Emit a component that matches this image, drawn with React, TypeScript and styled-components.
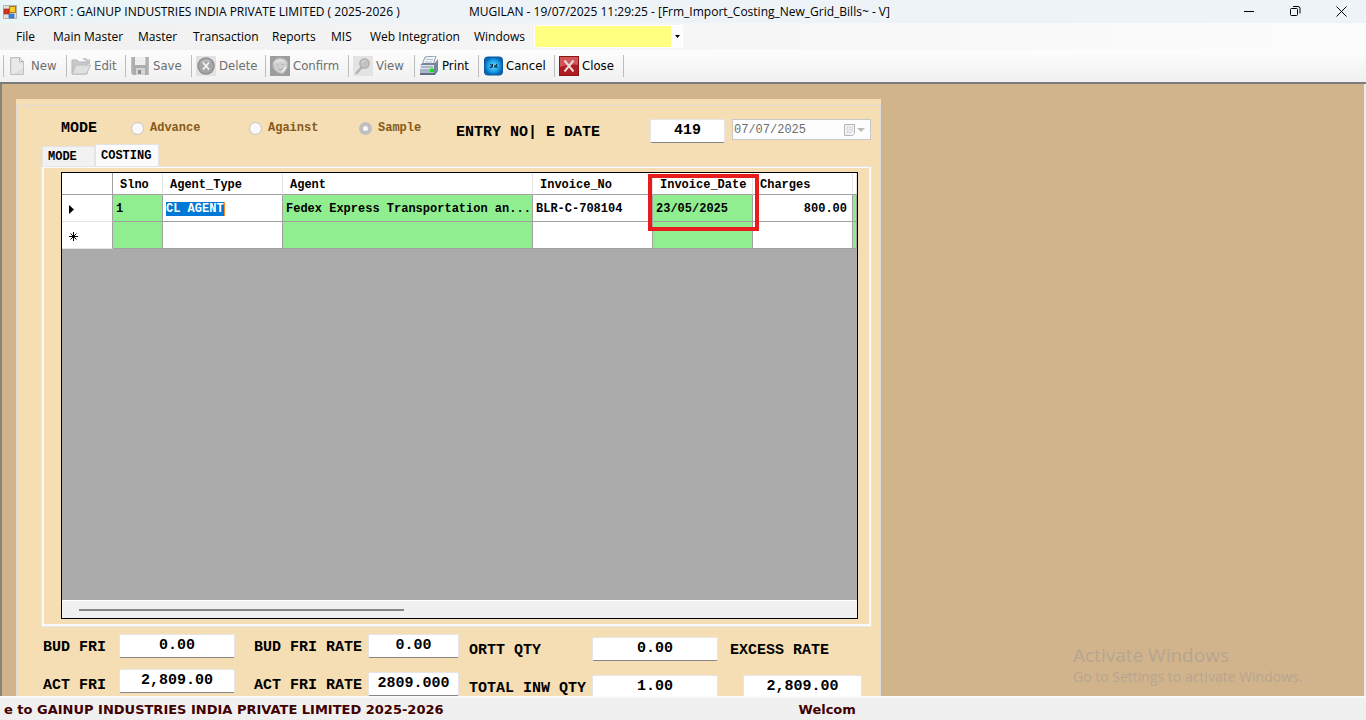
import React from 'react';
import styled, { createGlobalStyle } from 'styled-components';

const mono = `"Liberation Mono", "Courier New", monospace`;
const sansUi = `"Open Sans", "Segoe UI", sans-serif`;
const toolUi = `"DejaVu Sans Condensed", "DejaVu Sans", Tahoma, sans-serif`;
const tan = '#d2b48c';
const wheat = '#f5deb3';
const green = '#90ee90';

const Global = createGlobalStyle`
  * { box-sizing: border-box; }
  body { margin: 0; background: ${tan}; }
  button, input, select { font: inherit; color: inherit; margin: 0; }
  button { background: none; border: 0; padding: 0; white-space: nowrap; }
`;

const Shell = styled.div`
  display: flex;
  flex-direction: column;
  height: 100vh;
  overflow: hidden;
  color: #000;
  font: 12px/16px ${sansUi};
`;

const TitleBar = styled.header`
  flex: none;
  display: flex;
  align-items: center;
  height: 23px;
  padding-left: 3px;
  background: linear-gradient(90deg, #e9f5f6 0, #eef3f8 300px);
`;
const TitleText = styled.span<{ $w?: number }>`
  width: ${p => (p.$w ? `${p.$w}px` : 'auto')};
  white-space: nowrap;
`;
const TitleIcon = styled.svg`
  margin-right: 6px;
`;
const WindowButtons = styled.div`
  display: flex;
  margin-left: auto;
  padding-right: 2px;
`;
const WindowButton = styled.button`
  display: flex;
  align-items: center;
  justify-content: center;
  width: 46px;
  height: 20px;
`;

const MenuBar = styled.nav`
  flex: none;
  display: flex;
  align-items: center;
  height: 27px;
  padding-left: 16px;
  background: linear-gradient(90deg, #f0f0f0, #fcfcfc);
`;
const MenuItem = styled.button<{ $w: number }>`
  flex: none;
  width: ${p => p.$w}px;
  text-align: left;
`;
const CompanyPicker = styled.label`
  display: flex;
  width: 149px;
  height: 23px;
  background: #fdfdfd;
  border: 1px solid #fff;
`;
const PickerSelect = styled.select`
  width: 136px;
  height: 21px;
  appearance: none;
  border: 0;
  background: #ffff80;
`;
const PickerArrow = styled.svg`
  margin: 9px 0 0 3px;
`;

const ToolBar = styled.div`
  flex: none;
  display: flex;
  align-items: center;
  height: 34px;
  padding-left: 3px;
  background: linear-gradient(#fdfdfd, #f0f0f0);
  border-bottom: 2px solid #7b7b7b;
  font: 13px/16px ${toolUi};
`;
const Tool = styled.button<{ $w: number }>`
  display: flex;
  align-items: center;
  gap: 3px;
  flex: none;
  width: ${p => p.$w}px;
  height: 22px;
  padding-left: 4px;
  border-left: 1px solid #bdbdbd;
  color: #000;
  &:disabled { color: #6d6d6d; }
`;
const ToolEnd = styled.span`
  width: 1px;
  height: 22px;
  background: #bdbdbd;
`;

const Workspace = styled.main`
  position: relative;
  flex: 1;
  min-height: 0;
  overflow: hidden;
  padding: 15px 0 0 14px;
  background: ${tan};
  border-left: 2px solid #8a8378;
  border-right: 2px solid #ececec;
`;
const Form = styled.form`
  max-width: 865px;
  padding-top: 6px;
  background: ${wheat};
  font: bold 15px/16px ${mono};
`;
const GroupBox = styled.div`
  padding: 13px 8px 20px 24px;
  border: 1px solid #dcdcdc;
`;

const TopRow = styled.div`
  display: flex;
  align-items: flex-start;
  height: 25px;
  padding-left: 20px;
`;
const ModeLabel = styled.span`
  width: 70px;
  line-height: 20px;
`;
const RadioLabel = styled.label<{ $w: number }>`
  display: flex;
  align-items: center;
  gap: 6px;
  width: ${p => p.$w}px;
  height: 18px;
  font-size: 12px;
  line-height: 18px;
  color: #86591a;
`;
const Radio = styled.input`
  appearance: none;
  width: 13px;
  height: 13px;
  border: 1px solid #c3c3c3;
  border-radius: 50%;
  background: #f9f9f9;
  &:checked { border: 4px solid #bfbfbf; }
`;
const EntryLabel = styled.label`
  width: 194px;
  line-height: 28px;
  white-space: nowrap;
`;
const NumberBox = styled.input<{ $w: number }>`
  flex: none;
  display: block;
  width: ${p => p.$w}px;
  height: 24px;
  padding: 0 0 2px;
  text-align: center;
  background: #fff;
  border: 1px solid #e6e6e6;
  border-bottom-color: #868686;
  border-radius: 2px;
`;
const DateBox = styled.div`
  display: flex;
  align-items: center;
  width: 139px;
  height: 21px;
  margin-left: 7px;
  padding: 0 5px 0 1px;
  background: #fdfdfd;
  border: 1px solid #c8c8c8;
`;
const DateInput = styled.input`
  width: 110px;
  padding: 0;
  border: 0;
  background: none;
  font: 12px/16px ${mono};
  color: #6d6d6d;
`;

const TabStrip = styled.div`
  display: flex;
  align-items: flex-end;
  padding-left: 1px;
`;
const Tab = styled.button<{ $active?: boolean }>`
  width: ${p => (p.$active ? 64 : 53)}px;
  height: ${p => (p.$active ? 22 : 20)}px;
  padding: 0 5px;
  text-align: left;
  font-size: 12px;
  background: ${p => (p.$active ? '#fbfbfb' : '#f2f2f2')};
  border: 1px solid #e4e4e4;
  border-bottom: 0;
`;
const TabPage = styled.div`
  padding: 4px 11px 5px 17px;
  border: 3px solid #fafafa;
  border-top-width: 2px;
  outline: 1px solid #e6e6e6;
  outline-offset: -1px;
`;
const GridBox = styled.div`
  display: flex;
  flex-direction: column;
  height: 447px;
  overflow: hidden;
  background: #ababab;
  border: 1px solid #000;
`;
const Grid = styled.table`
  table-layout: fixed;
  width: 100%;
  border-collapse: separate;
  border-spacing: 0;
  font-size: 12px;
  background: #fff;
`;
const Head = styled.th<{ $w?: number }>`
  position: relative;
  width: ${p => (p.$w ? `${p.$w}px` : 'auto')};
  height: 22px;
  padding: 2px 0 0 7px;
  text-align: left;
  font-weight: bold;
  border-right: 1px solid #e3e3e3;
  border-bottom: 1px solid #a0a0a0;
  white-space: nowrap;
  &:first-child { border-right-color: #a0a0a0; }
`;
const Cell = styled.td<{ $green?: boolean; $right?: boolean }>`
  height: 27px;
  padding: 2px 5px 0 3px;
  text-align: ${p => (p.$right ? 'right' : 'left')};
  background: ${p => (p.$green ? green : '#fff')};
  border-right: 1px solid #a0a0a0;
  border-bottom: 1px solid #a0a0a0;
  white-space: nowrap;
`;
const RowHead = styled.th`
  padding: 2px 0 0 6px;
  text-align: left;
  border-right: 1px solid #a0a0a0;
  border-bottom: 1px solid #e3e3e3;
  svg { display: block; }
`;
const Selected = styled.span`
  background: #0078d7;
  color: #fff;
  border-right: 1px solid #ff8728;
`;
const Highlight = styled.span`
  position: absolute;
  left: -5px;
  right: -7px;
  top: 1px;
  height: 57px;
  border: 4px solid #e81c1c;
  z-index: 1;
`;
const ScrollTrack = styled.div`
  height: 18px;
  margin-top: auto;
  padding: 8px 17px;
  background: #f0f0f0;
  border-top: 1px solid #fff;
`;
const ScrollThumb = styled.div`
  width: 325px;
  height: 2px;
  background: #868686;
`;

const Totals = styled.div`
  display: flex;
  align-items: flex-start;
  padding: 7px 0 0 2px;
`;
const Pair = styled.div<{ $drop?: boolean }>`
  display: flex;
  flex: none;
  padding-top: ${p => (p.$drop ? 3 : 0)}px;
  margin-right: ${p => (p.$drop ? 12 : 10)}px;
  &:first-child { margin-right: 19px; }
  &:last-child { margin-right: 0; }
`;
const Stack = styled.div<{ $w: number; $gap?: number; $end?: boolean }>`
  display: flex;
  flex-direction: column;
  align-items: ${p => (p.$end ? 'flex-end' : 'stretch')};
  gap: ${p => p.$gap ?? 14}px;
  width: ${p => p.$w}px;
`;
const TotalLabel = styled.label`
  align-self: flex-start;
  height: 24px;
  line-height: 27px;
  white-space: nowrap;
`;

const StatusBar = styled.footer`
  flex: none;
  display: flex;
  gap: 355px;
  height: 24px;
  padding-left: 4px;
  background: #f0f0f0;
  border-top: 2px solid #fafafa;
  font: bold 13px/23px "DejaVu Sans", Verdana, sans-serif;
  color: #400000;
  white-space: nowrap;
`;
const Watermark = styled.aside`
  position: absolute;
  right: 55px;
  bottom: 9px;
  width: 236px;
  font-size: 14px;
  line-height: 20px;
  color: #b5a591;
  white-space: nowrap;
`;
const WatermarkTitle = styled.div`
  font-size: 19px;
  line-height: 24px;
`;

const AppIcon = () => (
  <TitleIcon width="14" height="14" viewBox="0 0 14 14" aria-hidden="true">
    <rect x=".5" y=".5" width="13" height="13" fill="#e2e2dc" stroke="#b5b5b0" />
    <rect x="6.500" y="1.500" width="6" height="6" fill="#fbcb2e" stroke="#a9791a" />
    <rect x="1" y="4" width="5" height="5" fill="#d9331c" stroke="#9c2413" strokeWidth=".6" />
    <rect x="6" y="9" width="5" height="4" fill="#3f86e8" stroke="#2358a8" strokeWidth=".6" />
  </TitleIcon>
);

const icon = { width: 20, height: 20, viewBox: '0 0 20 20', 'aria-hidden': true } as const;

const NewIcon = () => (
  <svg {...icon}>
    <path d="M2.500 1.500h9l4 4v13h-13z" fill="#dedede" stroke="#c0c0c0" />
    <path d="M4 3h7v4h4v5L6 17H4z" fill="#e9e9e9" />
    <path d="M11.500 1.500v4h4z" fill="#f7f7f7" stroke="#b6b6b6" />
  </svg>
);
const EditIcon = () => (
  <svg {...icon}>
    <path d="M1 4h5l2 2h8v12H1z" fill="#c9c9c9" stroke="#b5b5b5" />
    <path d="M5 9h14.500l-4 9H1z" fill="#e0e0e0" stroke="#bcbcbc" />
    <path d="M11 3c3-2 5-1 6 1l2-1v5h-5l1.500-2c-1-2-2-2-4.500-3z" fill="#c3c3c3" />
  </svg>
);
const SaveIcon = () => (
  <svg {...icon}>
    <path d="M1 1h18v18H3l-2-2z" fill="#acacac" />
    <path d="M5 1h10.500v8H5z" fill="#eeeeee" />
    <path d="M1 1h1.500v16H1zM17.500 1H19v18h-1.500z" fill="#bcbcbc" />
    <path d="M6 12h9v7H6z" fill="#d4d4d4" />
    <path d="M8 14h3v4H8z" fill="#8f8f8f" />
  </svg>
);
const DeleteIcon = () => (
  <svg {...icon}>
    <path d="M0 0h20v20H0z" fill="#e2e2e2" />
    <circle cx="10" cy="10" r="8" fill="#a6a6a6" stroke="#8f8f8f" strokeWidth="1.500" />
    <path d="M4 7c2-4 9-5 12-1-4-1-8 0-12 1z" fill="#bcbcbc" />
    <path d="M7 6.500l6 7M13 6.500l-6 7" stroke="#f6f6f6" strokeWidth="1.800" />
  </svg>
);
const ConfirmIcon = () => (
  <svg {...icon}>
    <path d="M0 0h20v20H0z" fill="#9d9d9d" />
    <path d="M10 2c4 0 8 2 7.500 7 0 4-2.500 7-5 9-5-1-9-4-9.500-8S5 2 10 2z" fill="#cfcfcf" stroke="#b4b4b4" />
    <path d="M3 8c2-5 9-6 13-2-4 0-9 0-13 2z" fill="#dedede" />
    <path d="M7 9h1.500M12 8.500h1.500M8 13c2 1 4 1 5-.5" stroke="#a8a8a8" fill="none" />
    <path d="M12 16l4-5" stroke="#f0f0f0" strokeWidth="1.500" />
  </svg>
);
const ViewIcon = () => (
  <svg {...icon}>
    <path d="M0 0h20v20H0z" fill="#e3e3e3" />
    <path d="M9 11l-5.500 6" stroke="#b0b0b0" strokeWidth="2.500" strokeLinecap="round" />
    <circle cx="11.500" cy="7.500" r="4.700" fill="#c2c2c2" stroke="#acacac" strokeWidth="1.300" />
    <path d="M9 7c0-2 2-3 4-2" stroke="#dcdcdc" fill="none" />
  </svg>
);
const PrintIcon = () => (
  <svg {...icon}>
    <path d="M6 1l11-1-3 9H3z" fill="#f4f7fa" stroke="#8d9aac" />
    <path d="M7 3.500h7M6 6h7" stroke="#b4bfce" />
    <path d="M1 9l3-2h12l3-4v12l-3 4H1z" fill="#76859c" />
    <path d="M1 9h14v4H1z" fill="#dde4ec" />
    <path d="M1 13h14v5.500H1z" fill="#a9b5c5" />
    <path d="M1 18h15" stroke="#4d5a70" strokeWidth="1.500" />
    <path d="M2 11h12" stroke="#7d8ba0" />
    <path d="M11 12.500h4v3.500h-4z" fill="#16e01f" />
  </svg>
);
const CancelIcon = () => (
  <svg {...icon}>
    <defs>
      <radialGradient id="cancelGlow">
        <stop offset="0" stopColor="#67d3ff" />
        <stop offset=".6" stopColor="#1fa3ea" />
        <stop offset="1" stopColor="#0665b4" />
      </radialGradient>
    </defs>
    <rect x="1.500" y="1" width="18" height="18" rx="3" fill="url(#cancelGlow)" stroke="#075a9e" />
    <path d="M7 8l2 1.500-2 2.500M9.500 8v2l-1 2M11 10h2l-1.500 2M14 8l-1 2 1.500 2" stroke="#0b2233" fill="none" />
  </svg>
);
const CloseIcon = () => (
  <svg {...icon}>
    <path d="M0 0h20v20H0z" fill="#b01c20" />
    <path d="M1 1h18v8c-6-1-12 0-18 2z" fill="#cf5558" />
    <path d="M.5.500h19v19H.500z" fill="none" stroke="#8c1518" />
    <path d="M5.500 4.500l9 11M14.500 4.500l-9 11" stroke="#e9dada" strokeWidth="2" />
  </svg>
);

const MinimizeIcon = () => (
  <svg width="10" height="11" aria-hidden="true"><path d="M0 5.500h10" stroke="#000" /></svg>
);
const RestoreIcon = () => (
  <svg width="11" height="11" fill="none" stroke="#000" aria-hidden="true">
    <rect x=".5" y="2.500" width="7" height="7" rx="1" />
    <path d="M3 .500h5a2 2 0 0 1 2 2V7.500" />
  </svg>
);
const ExitIcon = () => (
  <svg width="11" height="11" stroke="#000" aria-hidden="true"><path d="M.5.500l10 10M10.500.500l-10 10" /></svg>
);
const CalendarIcon = () => (
  <svg width="21" height="14" viewBox="0 0 21 14" aria-hidden="true">
    <path d="M.5 1.500h10v9l-2 2h-8z" fill="#f4f4f4" stroke="#b9b4b4" />
    <path d="M2 4h7M2 6.500h7M2 9h7M3.500 3v8M6 3v8M8.500 3v6" stroke="#dcdce2" />
    <path d="M13 5h8l-4 4z" fill="#bdbdb8" />
  </svg>
);

const menus: [string, number][] = [
  ['File', 37], ['Main Master', 85], ['Master', 55], ['Transaction', 79], ['Reports', 59],
  ['MIS', 39], ['Web Integration', 104], ['Windows', 60],
];

const tools: { name: string; width: number; Icon: () => React.ReactElement; off?: boolean }[] = [
  { name: 'New', width: 63, Icon: NewIcon, off: true },
  { name: 'Edit', width: 59, Icon: EditIcon, off: true },
  { name: 'Save', width: 66, Icon: SaveIcon, off: true },
  { name: 'Delete', width: 74, Icon: DeleteIcon, off: true },
  { name: 'Confirm', width: 83, Icon: ConfirmIcon, off: true },
  { name: 'View', width: 66, Icon: ViewIcon, off: true },
  { name: 'Print', width: 64, Icon: PrintIcon },
  { name: 'Cancel', width: 76, Icon: CancelIcon },
  { name: 'Close', width: 69, Icon: CloseIcon },
];

export default function App() {
  return (
    <Shell>
      <Global />
      <TitleBar>
        <AppIcon />
        <TitleText $w={446}>EXPORT : GAINUP INDUSTRIES INDIA PRIVATE LIMITED ( 2025-2026 )</TitleText>
        <TitleText>MUGILAN - 19/07/2025 11:29:25 - [Frm_Import_Costing_New_Grid_Bills~ - V]</TitleText>
        <WindowButtons>
          <WindowButton aria-label="Minimize"><MinimizeIcon /></WindowButton>
          <WindowButton aria-label="Restore"><RestoreIcon /></WindowButton>
          <WindowButton aria-label="Exit"><ExitIcon /></WindowButton>
        </WindowButtons>
      </TitleBar>

      <MenuBar>
        {menus.map(([text, width]) => <MenuItem key={text} $w={width}>{text}</MenuItem>)}
        <CompanyPicker>
          <PickerSelect aria-label="Company" />
          <PickerArrow width="7" height="4" viewBox="0 0 7 4"><path d="M1 0h5L3.500 3z" /></PickerArrow>
        </CompanyPicker>
      </MenuBar>

      <ToolBar>
        {tools.map(({ name, width, Icon, off }) => (
          <Tool key={name} type="button" $w={width} disabled={off}><Icon />{name}</Tool>
        ))}
        <ToolEnd />
      </ToolBar>

      <Workspace>
        <Form>
          <GroupBox>
            <TopRow>
              <ModeLabel>MODE</ModeLabel>
              <RadioLabel $w={118}><Radio type="radio" name="mode" disabled />Advance</RadioLabel>
              <RadioLabel $w={110}><Radio type="radio" name="mode" disabled />Against</RadioLabel>
              <RadioLabel $w={97}><Radio type="radio" name="mode" disabled defaultChecked />Sample</RadioLabel>
              <EntryLabel htmlFor="entry-no">ENTRY NO| E DATE</EntryLabel>
              <NumberBox id="entry-no" $w={75} defaultValue="419" />
              <DateBox>
                <DateInput aria-label="Entry date" disabled defaultValue="07/07/2025" />
                <CalendarIcon />
              </DateBox>
            </TopRow>

            <TabStrip role="tablist">
              <Tab type="button" role="tab">MODE</Tab>
              <Tab type="button" role="tab" aria-selected="true" $active>COSTING</Tab>
            </TabStrip>
            <TabPage>
              <GridBox>
                <Grid>
                  <thead>
                    <tr>
                      <Head $w={51} />
                      <Head $w={50}>Slno</Head>
                      <Head $w={120}>Agent_Type</Head>
                      <Head $w={250}>Agent</Head>
                      <Head $w={120}>Invoice_No</Head>
                      <Head $w={100}>Invoice_Date<Highlight /></Head>
                      <Head $w={100}>Charges</Head>
                      <Head />
                    </tr>
                  </thead>
                  <tbody>
                    <tr>
                      <RowHead scope="row"><svg width="8" height="9"><path d="M1 0l5 4.500L1 9z" /></svg></RowHead>
                      <Cell $green>1</Cell>
                      <Cell><Selected>CL AGENT</Selected></Cell>
                      <Cell $green>Fedex Express Transportation an...</Cell>
                      <Cell>BLR-C-708104</Cell>
                      <Cell $green>23/05/2025</Cell>
                      <Cell $right>800.00</Cell>
                      <Cell $green />
                    </tr>
                    <tr>
                      <RowHead scope="row">
                        <svg width="10" height="9" stroke="#000"><path d="M5.500 0v9M1 4.500h9M2.500 1.500l6 6M8.500 1.500l-6 6" /></svg>
                      </RowHead>
                      <Cell $green />
                      <Cell />
                      <Cell $green />
                      <Cell />
                      <Cell $green />
                      <Cell />
                      <Cell $green />
                    </tr>
                  </tbody>
                </Grid>
                <ScrollTrack><ScrollThumb /></ScrollTrack>
              </GridBox>
            </TabPage>

            <Totals>
              <Pair>
                <Stack $w={76}>
                  <TotalLabel htmlFor="bud-fri">BUD FRI</TotalLabel>
                  <TotalLabel htmlFor="act-fri">ACT FRI</TotalLabel>
                </Stack>
                <Stack $w={116} $gap={11}>
                  <NumberBox id="bud-fri" $w={116} defaultValue="0.00" />
                  <NumberBox id="act-fri" $w={116} defaultValue="2,809.00" />
                </Stack>
              </Pair>
              <Pair>
                <Stack $w={114}>
                  <TotalLabel htmlFor="bud-rate">BUD FRI RATE</TotalLabel>
                  <TotalLabel htmlFor="act-rate">ACT FRI RATE</TotalLabel>
                </Stack>
                <Stack $w={91}>
                  <NumberBox id="bud-rate" $w={91} defaultValue="0.00" />
                  <NumberBox id="act-rate" $w={91} defaultValue="2809.000" />
                </Stack>
              </Pair>
              <Pair $drop>
                <Stack $w={123}>
                  <TotalLabel htmlFor="ortt-qty">ORTT QTY</TotalLabel>
                  <TotalLabel htmlFor="inw-qty">TOTAL INW QTY</TotalLabel>
                </Stack>
                <Stack $w={126}>
                  <NumberBox id="ortt-qty" $w={126} defaultValue="0.00" />
                  <NumberBox id="inw-qty" $w={126} defaultValue="1.00" />
                </Stack>
              </Pair>
              <Pair $drop>
                <Stack $w={132} $end>
                  <TotalLabel htmlFor="excess-rate">EXCESS RATE</TotalLabel>
                  <NumberBox id="excess-rate" $w={119} defaultValue="2,809.00" />
                </Stack>
              </Pair>
            </Totals>
          </GroupBox>
        </Form>
        <Watermark>
          <WatermarkTitle>Activate Windows</WatermarkTitle>
          Go to Settings to activate Windows.
        </Watermark>
      </Workspace>

      <StatusBar>
        <span>e to GAINUP INDUSTRIES INDIA PRIVATE LIMITED 2025-2026</span>
        <span>Welcom</span>
      </StatusBar>
    </Shell>
  );
}
